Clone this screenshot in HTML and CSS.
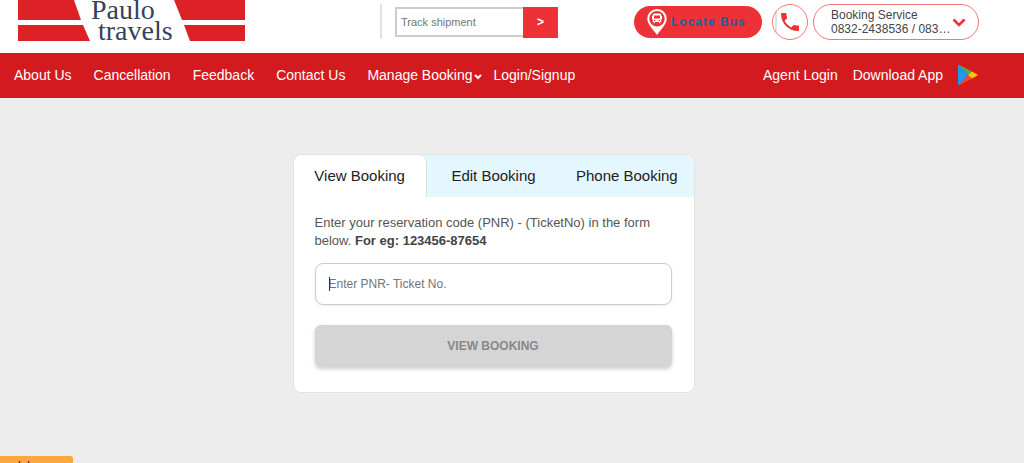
FILE: index.html
```html
<!DOCTYPE html>
<html lang="en">
<head>
<meta charset="utf-8">
<meta name="viewport" content="width=device-width, initial-scale=1">
<title>Paulo Travels - Manage Booking</title>
<link rel="stylesheet" href="styles.css">
</head>
<body>
<div class="page">
  <header class="topbar">
    <a class="logo" href="#" aria-label="Paulo travels">
      <svg width="228" height="44" viewBox="0 0 228 44">
        <g fill="#dc2127">
          <path d="M0 0H56L63 20H0Z"/>
          <path d="M0 25H65L72 41H0Z"/>
          <path d="M156 0H227V20H164Z"/>
          <path d="M166 25H227V41H172Z"/>
        </g>
        <text class="logo-text" x="73" y="19">Paulo</text>
        <text class="logo-text" x="80" y="40">travels</text>
      </svg>
    </a>
    <form class="track">
      <input class="track-input" type="text" placeholder="Track shipment" aria-label="Track shipment">
      <button class="track-button" type="button">&gt;</button>
    </form>
    <div class="contact">
      <a class="locate" href="#">
        <svg width="20" height="26" viewBox="0 0 20 26">
          <path fill="#fff" fill-rule="evenodd" d="M10 0A9.700 9.700 0 0 1 19.700 9.700C19.700 15 14 20 10 26C6 20 .3 15 .3 9.700A9.700 9.700 0 0 1 10 0ZM10 2A7.700 7.700 0 1 0 10 17.400A7.700 7.700 0 1 0 10 2Z"/>
          <path fill="#fff" fill-rule="evenodd" d="M7.500 4.500H12.500Q14.300 4.500 14.300 6V7H15V10H14.300V13H13.300V14.300H12V13H8V14.300H6.700V13H5.700V10H5V7H5.700V6Q5.700 4.500 7.500 4.500ZM7 6.500V9.500H13V6.500ZM7 11V12H8.300V11ZM11.700 11V12H13V11Z"/>
        </svg>
        <span>Locate Bus</span>
      </a>
      <a class="call" href="#" aria-label="Call">
        <svg width="24" height="24" viewBox="0 0 24 24" fill="#ec3237"><path d="M6.620 10.790c1.440 2.830 3.760 5.140 6.590 6.590l2.200-2.200c.27-.27.670-.36 1.020-.24 1.120.37 2.330.57 3.570.57.550 0 1 .45 1 1V20c0 .55-.45 1-1 1-9.390 0-17-7.610-17-17 0-.55.450-1 1-1h3.500c.55 0 1 .45 1 1 0 1.250.2 2.450.57 3.570.11.350.030.740-.25 1.020l-2.200 2.200z"/></svg>
      </a>
      <button class="service" type="button">
        <span class="service-text"><span>Booking Service</span><span>0832-2438536 / 083…</span></span>
        <svg width="14" height="9" viewBox="0 0 14 9" fill="none" stroke="#ec3237" stroke-width="2.600"><path d="M1.500 1.500L7 7L12.500 1.500"/></svg>
      </button>
    </div>
  </header>
  <nav class="nav">
    <div class="nav-main">
      <a href="#">About Us</a>
      <a href="#">Cancellation</a>
      <a href="#">Feedback</a>
      <a href="#">Contact Us</a>
      <div class="nav-pair">
        <a class="nav-menu" href="#">Manage Booking<svg width="8" height="6" viewBox="0 0 8 6" fill="none" stroke="#fff" stroke-width="2"><path d="M1 1L4 4L7 1"/></svg></a>
        <a href="#">Login/Signup</a>
      </div>
    </div>
    <div class="nav-side">
      <a href="#">Agent Login</a>
      <a class="download" href="#">Download App<svg width="20" height="22" viewBox="0 0 20 22">
        <path fill="#2196f3" d="M.5 1Q0 1 0 2V20Q0 21 .8 21L10 11Z"/>
        <path fill="#4caf50" d="M.5 1Q1 .6 2 1.200L14 7.500L10 11Z"/>
        <path fill="#f44336" d="M.8 21Q1.200 21.200 2 20.800L14 14.500L10 11Z"/>
        <path fill="#ffc107" d="M14 7.500L19 10.200Q20 11 19 11.800L14 14.500L10 11Z"/>
      </svg></a>
    </div>
  </nav>
  <main class="content">
    <section class="card">
      <div class="tabs" role="tablist">
        <button class="tab tab-active" type="button" role="tab" aria-selected="true">View Booking</button>
        <button class="tab" type="button" role="tab" aria-selected="false">Edit Booking</button>
        <button class="tab" type="button" role="tab" aria-selected="false">Phone Booking</button>
      </div>
      <form class="form">
        <label class="hint" for="pnr">Enter your reservation code (PNR) - (TicketNo) in the form below. <strong>For eg: 123456-87654</strong></label>
        <div class="field">
          <input class="pnr" id="pnr" type="text" placeholder="Enter PNR- Ticket No.">
          <span class="caret"></span>
        </div>
        <button class="submit" type="button" disabled>VIEW BOOKING</button>
      </form>
    </section>
  </main>
  <div class="status">lab</div>
</div>
</body>
</html>
```
FILE: styles.css
```css
* { box-sizing: border-box; }
body {
  margin: 0;
  background: #ededed;
  font-family: "Liberation Sans", Arial, sans-serif;
  font-size: 14px;
  color: #222;
}
a { color: inherit; text-decoration: none; }
button, input { font: inherit; margin: 0; }
svg { display: block; flex: none; }
.page { position: relative; height: 100vh; overflow: hidden; }

.topbar {
  display: flex;
  align-items: flex-start;
  height: 53px;
  padding: 0 45px 0 18px;
  background: #fff;
}
.logo-text { font-family: "Liberation Serif", serif; font-size: 28px; fill: #34435c; }
.track {
  display: flex;
  margin: 4px 0 0 134px;
  padding: 3px 0 0 13px;
  height: 35px;
  border-left: 2px solid #e2e2e2;
}
.track-input {
  width: 128px;
  height: 30px;
  padding: 0 4px;
  border: 2px solid #ccc;
  border-right: 0;
  border-radius: 0;
  font-size: 11px;
  outline: 0;
}
.track-input::placeholder, .pnr::placeholder { color: #757575; opacity: 1; }
.track-button {
  width: 35px;
  height: 31px;
  padding: 0 0 2px;
  border: 0;
  background: #ec3237;
  color: #fff;
  font-size: 12px;
  font-weight: bold;
}
.contact { display: flex; align-items: center; margin: 4px 0 0 auto; }
.locate {
  display: flex;
  align-items: center;
  gap: 4px;
  width: 128px;
  height: 32px;
  padding-left: 13px;
  border-radius: 16px;
  background: #ec3237;
  color: #1d6299;
  font-size: 12px;
  font-weight: bold;
  letter-spacing: 1px;
  white-space: nowrap;
}
.call {
  display: flex;
  align-items: center;
  justify-content: center;
  width: 36px;
  height: 36px;
  margin: 0 5px 0 10px;
  border: 1px solid #f0777a;
  border-radius: 50%;
  background: linear-gradient(90deg, transparent 2px, #e2e2e2 2px, #e2e2e2 4px, transparent 4px);
}
.service {
  display: flex;
  align-items: center;
  justify-content: space-between;
  width: 166px;
  height: 36px;
  padding: 0 12px 0 17px;
  border: 1px solid #f0777a;
  border-radius: 18px;
  background: #fff;
  color: #444;
  font-size: 12px;
  line-height: 14px;
  text-align: left;
  white-space: nowrap;
}
.service-text { display: grid; }

.nav {
  display: flex;
  align-items: center;
  justify-content: space-between;
  height: 45px;
  padding: 0 46px 2px 14px;
  background: #d31a1e;
  color: #fff;
  white-space: nowrap;
}
.nav-main { display: flex; gap: 22px; }
.nav-pair { display: flex; gap: 11px; }
.nav-menu { display: flex; align-items: center; gap: 2px; }
.nav-menu svg { margin-top: 4px; }
.nav-side, .download { display: flex; align-items: center; gap: 15px; }

.content { padding-right: 37px; }
.card {
  width: 402px;
  margin: 56px auto 0;
  border: 1px solid #e0e2e4;
  border-radius: 8px;
  background: #fff;
}
.tabs {
  display: grid;
  grid-template-columns: 1fr 1fr 1fr;
  border-radius: 8px 8px 0 0;
  background: #e4f6fe;
}
.tab {
  height: 42px;
  padding: 0 0 2px;
  border: 0;
  background: transparent;
  color: #222;
  font-size: 15px;
}
.tab-active { border-right: 1px solid #d8dfe4; border-radius: 8px 8px 0 0; background: #fff; }
.form { display: grid; padding: 17px 22px 25px 21px; }
.hint { margin-bottom: 13px; color: #555; font-size: 13px; line-height: 18px; }
.hint strong { color: #444; }
.field { position: relative; margin-bottom: 20px; }
.pnr {
  display: block;
  width: 100%;
  height: 42px;
  padding: 0 13px;
  border: 1px solid #ccc;
  border-radius: 8px;
  background: #fff;
  box-shadow: 0 1px 3px #0001;
  font-size: 12px;
  outline: 0;
}
.caret { position: absolute; left: 14px; top: 14px; width: 1px; height: 14px; background: #333; }
.submit {
  height: 42px;
  border: 0;
  border-radius: 6px;
  background: #d5d5d5;
  box-shadow: 0 2px 4px #0003;
  color: #888;
  font-size: 12px;
  font-weight: bold;
}
.status {
  position: absolute;
  left: 0;
  bottom: 0;
  width: 73px;
  height: 7px;
  padding: 3px 0 0 18px;
  overflow: hidden;
  border-radius: 0 3px 0 0;
  background: #ffa73c;
  font-size: 12px;
  line-height: 14px;
}
```
